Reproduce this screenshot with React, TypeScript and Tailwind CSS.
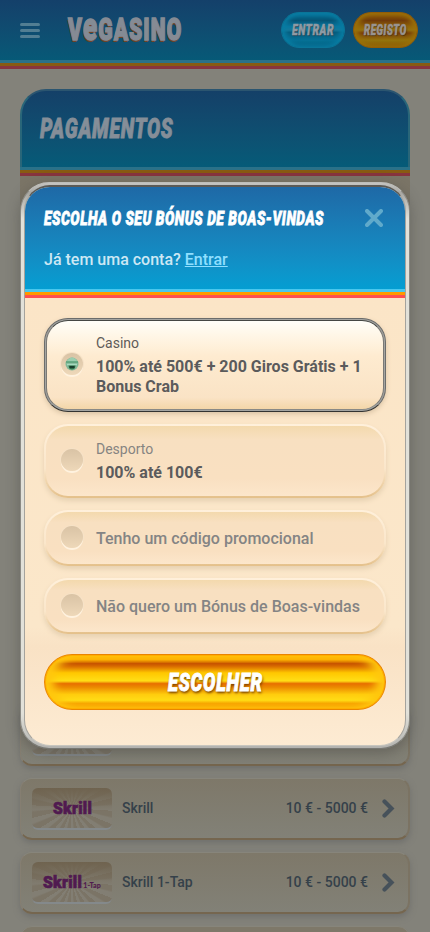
import { useLayoutEffect, useRef, useState } from "react";
import type { ReactNode } from "react";

/** Condensed display lettering: scales a heavy italic to the given width. */
function Display({ width, className = "", children }: { width: number; className?: string; children: ReactNode }) {
  const ref = useRef<HTMLSpanElement>(null);
  const [scale, setScale] = useState(1);
  useLayoutEffect(() => {
    if (ref.current) setScale(width / ref.current.offsetWidth);
  }, [width]);
  return (
    <span className="flex shrink-0 items-center" style={{ width }}>
      <span
        ref={ref}
        className={`block shrink-0 origin-left whitespace-nowrap font-black ${className}`}
        style={{ transform: `scaleX(${scale})` }}
      >
        {children}
      </span>
    </span>
  );
}

function Stripes({ dim = false }: { dim?: boolean }) {
  return (
    <div className="shrink-0">
      <div className={`h-[3px] ${dim ? "bg-[#2a7188]" : "bg-[#4ac7ed]"}`} />
      <div className={`h-[3px] ${dim ? "bg-[#885a12]" : "bg-[#ff9900]"}`} />
      <div className={`h-[3px] ${dim ? "bg-[#87343e]" : "bg-[#ff5050]"}`} />
    </div>
  );
}

function Header() {
  return (
    <header>
      <div className="flex h-[60px] items-center bg-linear-to-b from-[#14406a] to-[#065977] pl-5 pr-3">
        <div className="flex w-5 flex-col gap-[3px]">
          <div className="h-[3px] rounded bg-[#527e93]" />
          <div className="h-[3px] rounded bg-[#527e93]" />
          <div className="h-[3px] rounded bg-[#527e93]" />
        </div>
        <div className="ml-7">
          <Display
            width={114}
            className="-skew-x-3 text-[31px] leading-10 tracking-[1.5px] text-[#858b94] [-webkit-text-stroke:1.4px_#858b94] [text-shadow:-1px_2px_0_#704427]"
          >
            V<span className="text-[38px] leading-8">e</span>GASINO
          </Display>
        </div>
        <div className="ml-auto flex gap-2">
          <button className="flex h-9 w-16 items-center justify-center rounded-full border border-[#0a7598] bg-[linear-gradient(#087aa1,#065475_22%,#0878a0_40%,#17789a_50%,#065b7c_57%,#067196_80%,#056083)] shadow-[inset_4px_0_5px_#087ca2,inset_-4px_0_5px_#087ca2]">
            <Display width={42} className="text-[15px] italic tracking-[0.8px] text-[#8e9aa4] [-webkit-text-stroke:0.6px_#8e9aa4] [text-shadow:1px_1px_1px_#263f50]">ENTRAR</Display>
          </button>
          <button className="flex h-9 w-[65px] items-center justify-center rounded-full border border-[#925c08] bg-[linear-gradient(#98660a,#713b0a_22%,#8f6409_40%,#937311_50%,#783d08_59%,#94740d_80%,#8a5705)] shadow-[inset_4px_0_5px_#9a7008,inset_-4px_0_5px_#9a7008]">
            <Display width={43} className="text-[15px] italic tracking-[0.8px] text-[#999490] [-webkit-text-stroke:0.6px_#999490] [text-shadow:1px_1px_1px_#49310e]">REGISTO</Display>
          </button>
        </div>
      </div>
      <Stripes dim />
    </header>
  );
}

function Tile({ children }: { children?: ReactNode }) {
  return (
    <div className="flex h-[42px] w-20 items-center justify-center rounded-md border-b-2 border-[#84898b] bg-[linear-gradient(#6f634f,#7b746600_60%),repeating-conic-gradient(from_4deg_at_50%_50%,#7b7466_0deg_8deg,#827e73_11deg_18deg)] pt-0.5 text-[#501a50]">
      {children}
    </div>
  );
}

function SkrillLogo() {
  return <Display width={39} className="text-[16.5px] leading-5 tracking-[0.3px] [-webkit-text-stroke:0.7px_#501a50]">Skrill</Display>;
}

function PaymentRow({ name, logo }: { name?: string; logo?: ReactNode }) {
  return (
    <div className="flex h-[62px] shrink-0 items-center rounded-xl border-b-2 border-l border-r-2 border-t border-b-[#75664f] border-l-[#857e71] border-r-[#7b7363] border-t-[#87857b] bg-linear-to-b from-[#7e7869] to-[#828177] pl-[11px] pr-[13px] text-sm font-medium text-[#35414a] shadow-[0_3px_6px_#70706d]">
      <Tile>{logo}</Tile>
      {name && (
        <>
          <span className="-mt-0.5 ml-2.5">{name}</span>
          <span className="-mt-0.5 ml-auto">10 € - 5000 €</span>
          <svg className="ml-[14px] h-[19px] w-[13px]" viewBox="0 0 13 19" fill="none" stroke="#46515a" strokeWidth="4.2" strokeLinecap="round">
            <path d="M2.5 2.5 9.5 9.5 2.5 16.5" />
          </svg>
        </>
      )}
    </div>
  );
}

function Radio({ selected = false }: { selected?: boolean }) {
  return (
    <span className="flex size-[22px] shrink-0 items-center justify-center rounded-full bg-linear-to-b from-[#d9c3a5] to-[#eed8b9] shadow-[0_2px_0_#fff2df,0_0_0_1px_#f6e2c7]">
      {selected && (
        <svg className="size-[14px]" viewBox="0 0 14 14">
          <circle cx="7" cy="7" r="6.5" fill="#80b897" />
          <path d="M1.5 4.5Q7-3.5 12.5 4.5Z" fill="#9bceaf" />
          <path d="M1 5h12" stroke="#4f9c72" strokeWidth="1.2" />
          <path d="M2 7.5h10" stroke="#a7dbc0" strokeWidth="1.5" />
          <path d="M3.5 8.5h7q-.2 4-3.5 4t-3.5-4Z" fill="#397c53" />
          <path d="M4.5 9h5v2.2h-5Z" fill="#173f2b" />
        </svg>
      )}
    </span>
  );
}

function Option({ title, text, className = "" }: { title?: string; text: string; className?: string }) {
  return (
    <div className={`rounded-[24px] bg-[linear-gradient(#fff0db,#fae6ca_60%,#e4c08a)] p-[2px] shadow-[0_3px_5px_#e6d1b2] ${className}`}>
      <div className={`flex h-full items-center rounded-[22px] bg-[linear-gradient(#f3d9ad,#f8e0c1_20%,#f9e0c1_75%,#fce6cb)] pl-[15px] ${title ? "pb-px" : ""}`}>
        <span className="-mt-0.5"><Radio /></span>
        <span className="ml-[13px] pt-px">
          {title && <span className="mb-[5px] block text-sm leading-[18px] text-[#868481]">{title}</span>}
          <span className={`block whitespace-nowrap text-base leading-5 ${title ? "font-bold text-[#5b5b5c]" : "font-medium text-[#848484]"}`}>{text}</span>
        </span>
      </div>
    </div>
  );
}

function Modal() {
  return (
    <div className="absolute left-5 top-[182px] h-[567px] w-[390px] rounded-[29px] border border-x-[#8b8a84] border-b-[#777772] border-t-[#bdbdb9] bg-[linear-gradient(#c4c4c1,#a9a8a3_10px,#e2e1d9_36px,#e2e1d9_530px,#b2b2af)] px-[3px] py-[2px] shadow-[0_4px_14px_#3d3d3966]">
      <div className="flex h-full flex-col overflow-hidden rounded-[26px] border-x border-b border-t-2 border-x-[#a5a39d] border-b-[#c8c6bf] border-t-[#5b5a56] bg-[linear-gradient(#fbe5c7_110px,#fbe7ca_440px,#f9e2c5_460px,#fdebd3)]">
        <div className="h-[102px] shrink-0 bg-linear-to-b from-[#1e69a6] to-[#049ed2] px-[19px] pt-[19px]">
          <div className="flex h-6 items-center justify-between pr-[3px]">
            <Display width={280} className="text-[20.5px] italic leading-6 tracking-[0.8px] text-white [-webkit-text-stroke:0.8px_white]">ESCOLHA O SEU BÓNUS DE BOAS-VINDAS</Display>
            <svg className="size-[18px]" viewBox="0 0 18 18" stroke="#60aacb" strokeWidth="4" strokeLinecap="round">
              <path d="m2 2 14 14M16 2 2 16" />
            </svg>
          </div>
          <p className="mt-5 text-base font-medium leading-5 text-[#cde8f4]">
            Já tem uma conta? <a className="text-[#8fdfff] underline">Entrar</a>
          </p>
        </div>
        <Stripes />
        <div className="flex flex-col px-[19px] pt-[20px]">
          <div className="h-[94px] rounded-[24px] border border-[#6c6d6c] border-b-[#333432] bg-[#a4a5a2] p-px shadow-[0_2px_5px_#d9c3a4]">
            <div className="flex h-full items-center rounded-[22px] border border-x-[#7b7974] border-b-[#898a86] border-t-[#454744] bg-[linear-gradient(#fffef9,#fff7e8_15%,#feebd0_40%,#fae3c5_87%,#f3d6a8)] pl-[14px]">
              <span className="-mt-[2px]"><Radio selected /></span>
              <span className="ml-[13px] pt-px">
                <span className="mb-[5px] block text-sm leading-[18px] text-[#5e5b58]">Casino</span>
                <span className="block whitespace-nowrap text-base font-bold leading-5 text-[#5b5b5c]">100% até 500€ + 200 Giros Grátis + 1<br />Bonus Crab</span>
              </span>
            </div>
          </div>
          <Option title="Desporto" text="100% até 100€" className="mt-3 h-[74px]" />
          <Option text="Tenho um código promocional" className="mt-3 h-14" />
          <Option text="Não quero um Bónus de Boas-vindas" className="mt-3 h-14" />
          <button className="mt-5 flex h-14 items-center justify-center rounded-full border border-[#ea8500] bg-[linear-gradient(#ffb000,#ffb000_8%,#c65000_16%,#dc7200_22%,#ffc700_33%,#ffde16_48%,#e76f00_53%,#ec8b00_60%,#ffcc0d_73%,#ffdc16_84%,#f79d00_90%,#f8a000)] shadow-[inset_0_0_0_1px_#ffae00,inset_9px_0_9px_#ffc70e,inset_-9px_0_9px_#ffc70e]">
            <Display width={95} className="text-[26px] italic leading-8 tracking-[1px] text-white [-webkit-text-stroke:0.9px_white] [text-shadow:1px_2px_3px_#754100]">ESCOLHER</Display>
          </button>
        </div>
      </div>
    </div>
  );
}

export default function App() {
  return (
    <div className="relative h-[932px] w-[430px] overflow-hidden bg-[#83827a] font-[Roboto,sans-serif]">
      <Header />
      <main className="flex h-[863px] flex-col px-5 pt-5">
        <section className="flex h-[615px] shrink-0 flex-col">
          <div className="flex h-[78px] shrink-0 items-center rounded-t-[26px] border-x-2 border-t-2 border-x-[#296679] border-t-[#2b5570] bg-linear-to-b from-[#144068] to-[#055b78] pl-[18px]">
            <Display width={133} className="text-[27.5px] italic leading-8 tracking-[1px] text-[#858e98] [-webkit-text-stroke:0.9px_#858e98]">PAGAMENTOS</Display>
          </div>
          <Stripes dim />
          <div className="mb-4 flex-1 rounded-b-xl bg-[#7b7567]" />
        </section>
        <div className="flex flex-col gap-3">
          <PaymentRow />
          <PaymentRow name="Skrill" logo={<SkrillLogo />} />
          <PaymentRow
            name="Skrill 1-Tap"
            logo={
              <span className="flex items-baseline">
                <SkrillLogo />
                <span className="ml-px font-[Lato] text-[7px] font-black leading-3">1-Tap</span>
              </span>
            }
          />
          <div className="h-[62px] shrink-0 rounded-xl border border-[#87857b] bg-[#7e7869]" />
        </div>
      </main>
      <Modal />
    </div>
  );
}
